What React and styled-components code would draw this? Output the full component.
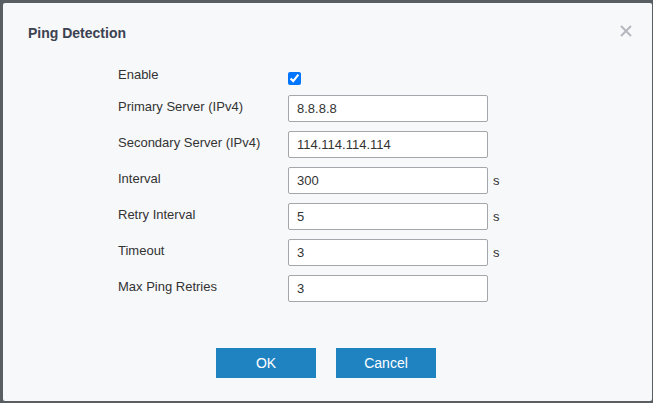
import React from 'react'
import styled, { createGlobalStyle } from 'styled-components'

const GlobalStyle = createGlobalStyle`
  html, body {
    margin: 0;
    padding: 0;
    background: #595e63;
    font-family: "Liberation Sans", Arial, sans-serif;
  }
`

const fields = [
  { label: 'Primary Server (IPv4)', value: '8.8.8.8' },
  { label: 'Secondary Server (IPv4)', value: '114.114.114.114' },
  { label: 'Interval', value: '300', unit: 's' },
  { label: 'Retry Interval', value: '5', unit: 's' },
  { label: 'Timeout', value: '3', unit: 's' },
  { label: 'Max Ping Retries', value: '3' },
]

const CloseIcon = () => (
  <svg width="12" height="12" viewBox="0 0 12 12">
    <path d="M1 1 L11 11 M11 1 L1 11" stroke="#b5b8be" strokeWidth="2" strokeLinecap="butt" />
  </svg>
)

const App = () => {
  return (
    <Page>
      <GlobalStyle />
      <Dialog>
        <Header>
          <Title>Ping Detection</Title>
          <Close>
            <CloseIcon />
          </Close>
        </Header>
        <Form>
          <Row>
            <Label>Enable</Label>
            <Check type="checkbox" defaultChecked />
          </Row>
          {fields.map((f) => (
            <Row key={f.label}>
              <Label>{f.label}</Label>
              <Input defaultValue={f.value} />
              {f.unit && <Unit>{f.unit}</Unit>}
            </Row>
          ))}
        </Form>
        <Buttons>
          <Button>OK</Button>
          <Button>Cancel</Button>
        </Buttons>
      </Dialog>
    </Page>
  )
}

export default App

const Page = styled.div`
  width: 653px;
  height: 403px;
  box-sizing: border-box;
  padding: 3px 1px 2px 3px;
`
const Dialog = styled.div`
  height: 100%;
  box-sizing: border-box;
  background: #f7f8fa;
  border-radius: 2px;
  padding-top: 20px;
`
const Header = styled.div`
  display: flex;
  justify-content: space-between;
  align-items: flex-start;
  padding: 0 20px 0 25px;
  height: 20px;
`
const Title = styled.div`
  font-size: 14px;
  font-weight: bold;
  line-height: 20px;
  color: #3b4251;
`
const Close = styled.div`
  margin-top: 2px;
  width: 12px;
  height: 12px;
  display: flex;
`
const Form = styled.div`
  margin-top: 20px;
  padding-left: 114px;
  display: flex;
  flex-direction: column;
  gap: 9px;
`
const Row = styled.div`
  display: grid;
  grid-template-columns: 171px 200px auto;
  align-items: start;
`
const Label = styled.div`
  padding: 3px 0 0 1px;
  font-size: 13px;
  line-height: 18px;
  color: #333;
`
const Check = styled.input`
  margin: 9px 0 1px 0;
  width: 13px;
  height: 13px;
`
const Input = styled.input`
  width: 200px;
  height: 27px;
  box-sizing: border-box;
  border: 1px solid #a3a6aa;
  border-radius: 2px;
  padding: 0 8px;
  font-family: "Liberation Sans", Arial, sans-serif;
  font-size: 13px;
  color: #333;
  background: #fff;
  outline: none;
`
const Unit = styled.span`
  margin-left: 5px;
  font-size: 13px;
  line-height: 27px;
  color: #333;
`
const Buttons = styled.div`
  margin-top: 46px;
  display: flex;
  justify-content: center;
  gap: 20px;
  padding-right: 3px;
`
const Button = styled.button`
  width: 100px;
  height: 30px;
  border: none;
  border-radius: 0;
  background: #1f83c1;
  color: #fff;
  font-family: "Liberation Sans", Arial, sans-serif;
  font-size: 14px;
  padding: 0;
  cursor: pointer;
`
